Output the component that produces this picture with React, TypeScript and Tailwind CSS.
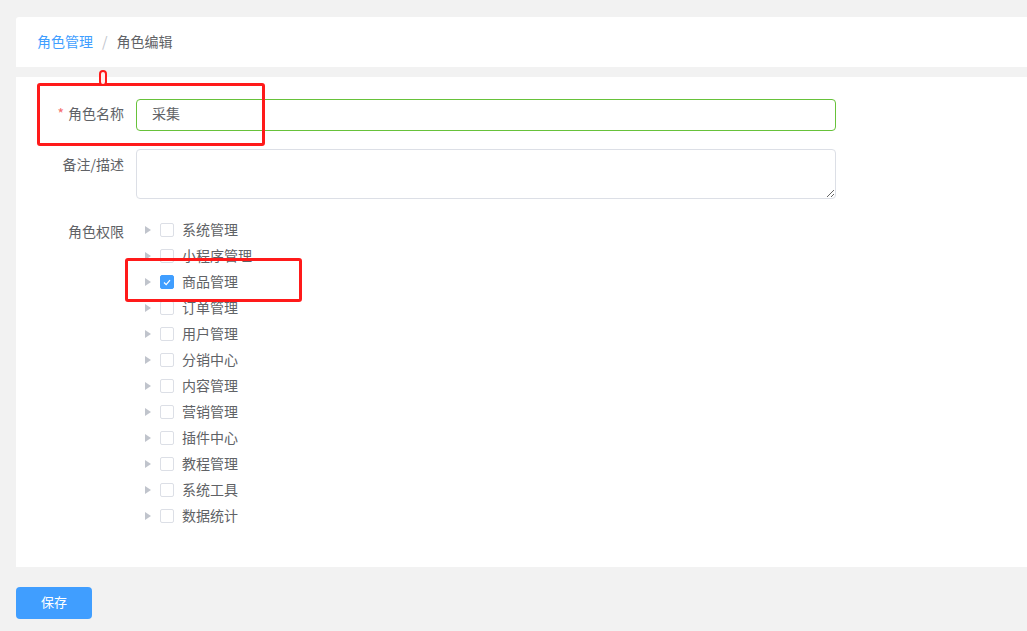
import React from "react";

const perms = [
  "系统管理",
  "小程序管理",
  "商品管理",
  "订单管理",
  "用户管理",
  "分销中心",
  "内容管理",
  "营销管理",
  "插件中心",
  "教程管理",
  "系统工具",
  "数据统计",
];

const Caret = () => (
  <span className="w-6 h-6 flex items-center justify-center">
    <svg width="6" height="8" viewBox="0 0 6 8">
      <path d="M0 0 L6 4 L0 8 Z" fill="#c0c4cc" />
    </svg>
  </span>
);

const Checkbox = ({ checked }: { checked?: boolean }) =>
  checked ? (
    <span className="w-[14px] h-[14px] rounded-[2px] bg-[#409eff] border border-[#409eff] flex items-center justify-center mr-2">
      <svg width="8" height="7" viewBox="0 0 8 7">
        <path d="M1 3.5 L3.2 5.6 L7 1.2" fill="none" stroke="#fff" strokeWidth="1.2" />
      </svg>
    </span>
  ) : (
    <span className="w-[14px] h-[14px] rounded-[2px] bg-white border border-[#dcdfe6] mr-2" />
  );

export default function App() {
  return (
    <div
      className="relative min-h-[631px] bg-[#f2f2f2] pt-[17px] pl-4 text-[14px] text-[#606266]"
      style={{ fontFamily: '"Noto Sans CJK SC", "Noto Sans", sans-serif' }}
    >
      {/* breadcrumb */}
      <div className="bg-white h-[50px] flex items-center pl-[21px] pb-[2px] rounded-tl-[3px]">
        <span className="text-[#409eff]">角色管理</span>
        <span className="mx-[9px] text-[#c0c4cc]">/</span>
        <span className="text-[#606266]">角色编辑</span>
      </div>

      {/* form */}
      <div className="bg-white mt-[10px] pt-[22px] pb-[38px] pl-5">
        <div className="flex mb-[18px]">
          <label className="w-[100px] pr-3 text-right leading-[28px]">
            <span className="text-[#f56c6c] mr-1">*</span>角色名称
          </label>
          <div className="w-[700px] h-8 border border-[#67c23a] rounded px-[15px] pb-[3px] flex items-center text-[#606266]">
            采集
          </div>
        </div>
        <div className="flex mb-[18px]">
          <label className="w-[100px] pr-3 text-right leading-[30px]">备注/描述</label>
          <textarea className="w-[700px] h-[50px] border border-[#dcdfe6] rounded px-[15px] py-[5px] outline-none" />
        </div>
        <div className="flex">
          <label className="w-[100px] pr-3 text-right leading-[28px]">角色权限</label>
          <div className="flex flex-col">
            {perms.map((p, i) => (
              <div key={p} className="h-[26px] flex items-center">
                <Caret />
                <Checkbox checked={i === 2} />
                <span className="-mt-[2px]">{p}</span>
              </div>
            ))}
          </div>
        </div>
      </div>

      <button className="mt-5 w-[76px] h-8 bg-[#409eff] text-white text-[13px] rounded pb-[2px]">保存</button>

      {/* annotations */}
      <div className="absolute left-[37px] top-[83px] w-[228px] h-[63px] border-[3px] border-[#ff1a1a] rounded-[3px]" />
      <div className="absolute left-[99px] top-[70px] w-[8px] h-[16px] border-[2px] border-[#ff1a1a] bg-[#fff0f0] rounded-full" />
      <div className="absolute left-[125px] top-[258px] w-[177px] h-[44px] border-[3px] border-[#ff1a1a] rounded-[3px]" />
    </div>
  );
}
